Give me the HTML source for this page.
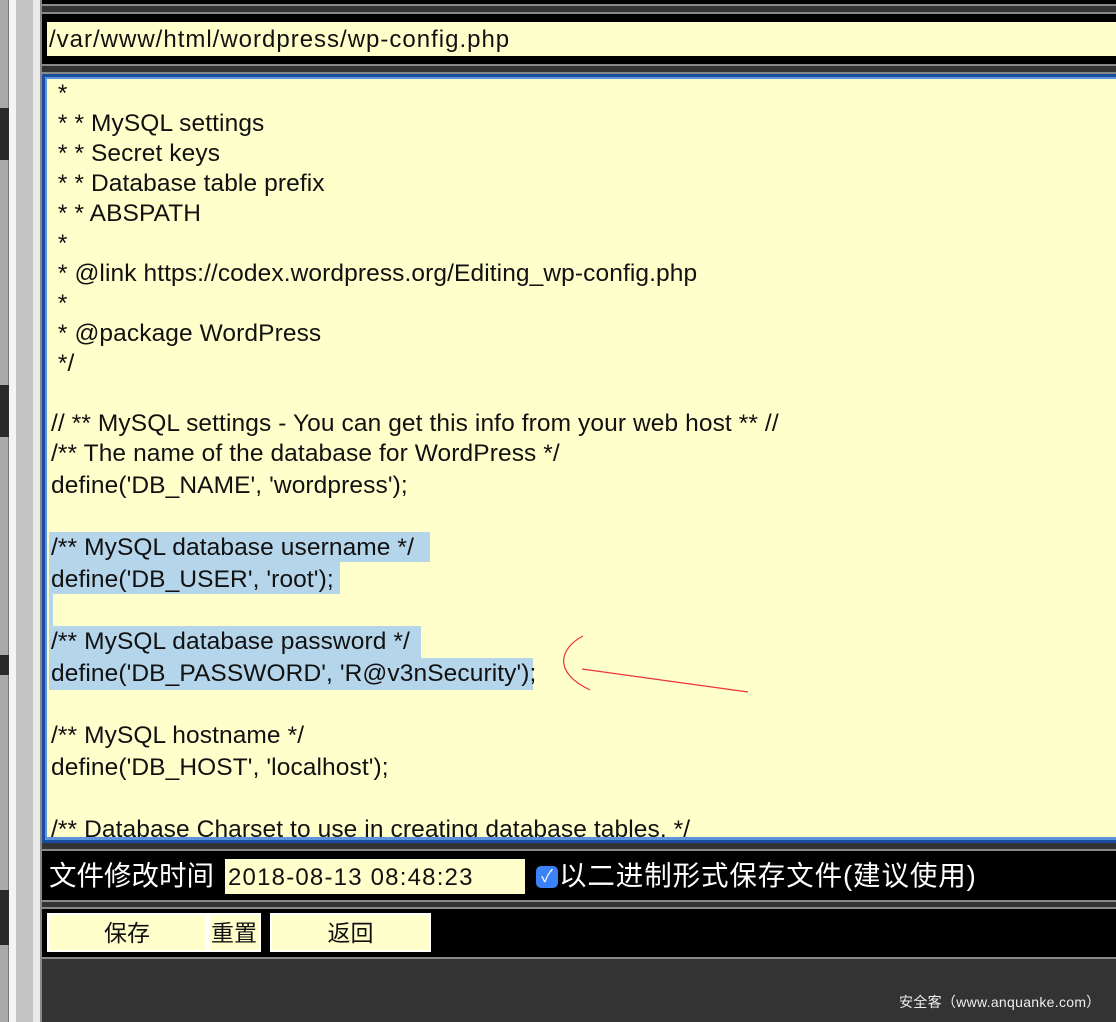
<!DOCTYPE html>
<html><head><meta charset="utf-8"><style>
*{margin:0;padding:0;box-sizing:border-box}
body{width:1116px;height:1022px;overflow:hidden;background:#333;position:relative;font-family:"Liberation Sans","Noto Sans CJK SC",sans-serif}
.a{position:absolute}
.ln{position:absolute;left:51px;font-size:24.5px;letter-spacing:0.1px;line-height:30.67px;height:30.67px;white-space:pre;color:#111}
.hl{position:absolute;background:#b5d5ea}
</style></head><body>
<div class="a" style="left:0;top:0;width:9px;height:1022px;background:#aaa;border-right:1px solid #777"></div>
<div class="a" style="left:0;top:108px;width:9px;height:52px;background:#2a2a2a"></div>
<div class="a" style="left:0;top:385px;width:9px;height:52px;background:#2a2a2a"></div>
<div class="a" style="left:0;top:655px;width:9px;height:20px;background:#2a2a2a"></div>
<div class="a" style="left:0;top:890px;width:9px;height:55px;background:#2a2a2a"></div>
<div class="a" style="left:9px;top:0;width:7px;height:1022px;background:#f4f4f4"></div>
<div class="a" style="left:16px;top:0;width:17px;height:1022px;background:#c4c4c4"></div>
<div class="a" style="left:33px;top:0;width:7px;height:1022px;background:#eaeaea"></div>
<div class="a" style="left:40px;top:0;width:2px;height:1022px;background:#888"></div>
<div class="a" style="left:42px;top:0;right:0;height:4px;background:#000"></div>
<div class="a" style="left:42px;top:4px;right:0;height:2px;background:#888"></div>
<div class="a" style="left:42px;top:6px;right:0;height:6px;background:#333"></div>
<div class="a" style="left:42px;top:12px;right:0;height:2px;background:#888"></div>
<div class="a" style="left:42px;top:14px;right:0;height:50px;background:#000"></div>
<div class="a" style="left:47px;top:22px;right:0;height:34px;background:#ffffcc;font-size:24px;letter-spacing:1px;line-height:36px;padding-left:2px;color:#111;white-space:nowrap">/var/www/html/wordpress/wp-config.php</div>
<div class="a" style="left:42px;top:64px;right:0;height:2px;background:#888"></div>
<div class="a" style="left:42px;top:66px;right:0;height:6px;background:#333"></div>
<div class="a" style="left:42px;top:72px;right:0;height:2px;background:#888"></div>
<div class="a" style="left:42px;top:74px;right:0;height:769px;background:#1a4fa0"></div>
<div class="a" style="left:45px;top:77px;right:0;height:763px;background:#5d95dc"></div>
<div class="a" style="left:47px;top:79px;right:0;height:758px;background:#ffffcc;overflow:hidden"></div>
<div class="hl" style="left:49px;top:532px;width:381px;height:30px"></div>
<div class="hl" style="left:49px;top:562px;width:291px;height:32px"></div>
<div class="hl" style="left:49px;top:594px;width:4px;height:32px"></div>
<div class="hl" style="left:49px;top:626px;width:372px;height:32px"></div>
<div class="hl" style="left:49px;top:658px;width:484px;height:32px"></div>
<div class="a" style="left:47px;top:79px;right:0;height:758px;overflow:hidden">
<div style="position:relative;left:-47px;top:-79px">
<div class="ln" style="top:79px"> *</div>
<div class="ln" style="top:109px"> * * MySQL settings</div>
<div class="ln" style="top:139px"> * * Secret keys</div>
<div class="ln" style="top:169px"> * * Database table prefix</div>
<div class="ln" style="top:199px"> * * ABSPATH</div>
<div class="ln" style="top:229px"> *</div>
<div class="ln" style="top:259px"> * @link https://codex.wordpress.org/Editing_wp-config.php</div>
<div class="ln" style="top:289px"> *</div>
<div class="ln" style="top:319px"> * @package WordPress</div>
<div class="ln" style="top:349px"> */</div>
<div class="ln" style="top:409px">// ** MySQL settings - You can get this info from your web host ** //</div>
<div class="ln" style="top:439px">/** The name of the database for WordPress */</div>
<div class="ln" style="top:471px">define('DB_NAME', 'wordpress');</div>
<div class="ln" style="top:533px">/** MySQL database username */</div>
<div class="ln" style="top:565px">define('DB_USER', 'root');</div>
<div class="ln" style="top:627px">/** MySQL database password */</div>
<div class="ln" style="top:659px">define('DB_PASSWORD', 'R@v3nSecurity');</div>
<div class="ln" style="top:721px">/** MySQL hostname */</div>
<div class="ln" style="top:753px">define('DB_HOST', 'localhost');</div>
<div class="ln" style="top:815px">/** Database Charset to use in creating database tables. */</div>
</div></div>
<svg class="a" style="left:0;top:0" width="1116" height="1022"><path d="M583 636 C560 648 552 672 590 690" stroke="#e33" stroke-width="1.2" fill="none"/><path d="M582 669 L748 692" stroke="#e33" stroke-width="1.2" fill="none"/></svg>
<div class="a" style="left:42px;top:843px;right:0;height:6px;background:#333"></div>
<div class="a" style="left:42px;top:849px;right:0;height:2px;background:#888"></div>
<div class="a" style="left:42px;top:851px;right:0;height:49px;background:#000"></div>
<div class="a" style="left:49px;top:857px;font-size:27.5px;line-height:38px;color:#fff;white-space:nowrap">文件修改时间</div>
<div class="a" style="left:225px;top:859px;width:300px;height:35px;background:#ffffcc;font-size:24px;letter-spacing:1.2px;line-height:37px;padding-left:3px;color:#111;white-space:nowrap">2018-08-13 08:48:23</div>
<div class="a" style="left:536px;top:866px;width:22px;height:22px;background:#3a82f6;border-radius:5px;color:#fff;font-size:17px;line-height:22px;text-align:center">✓</div>
<div class="a" style="left:559px;top:857px;font-size:27.5px;letter-spacing:0.9px;line-height:38px;color:#fff;white-space:nowrap">以二进制形式保存文件(建议使用)</div>
<div class="a" style="left:42px;top:900px;right:0;height:2px;background:#888"></div>
<div class="a" style="left:42px;top:902px;right:0;height:5px;background:#333"></div>
<div class="a" style="left:42px;top:907px;right:0;height:2px;background:#888"></div>
<div class="a" style="left:42px;top:909px;right:0;height:48px;background:#000"></div>
<div class="a" style="left:47px;top:913px;width:214px;height:39px;background:#fff"></div>
<div class="a" style="left:49px;top:915px;width:156px;height:35px;background:#ffffcc;font-size:23px;line-height:37px;text-align:center;color:#111">保存</div>
<div class="a" style="left:209px;top:915px;width:50px;height:35px;background:#ffffcc;font-size:23px;line-height:37px;text-align:center;color:#111">重置</div>
<div class="a" style="left:270px;top:913px;width:161px;height:39px;background:#fff"></div>
<div class="a" style="left:272px;top:915px;width:157px;height:35px;background:#ffffcc;font-size:23px;line-height:37px;text-align:center;color:#111">返回</div>
<div class="a" style="left:42px;top:957px;right:0;height:2px;background:#888"></div>
<div class="a" style="left:899px;top:992px;font-size:14px;letter-spacing:0.3px;line-height:20px;color:#eee;white-space:nowrap">安全客（www.anquanke.com）</div>
</body></html>
